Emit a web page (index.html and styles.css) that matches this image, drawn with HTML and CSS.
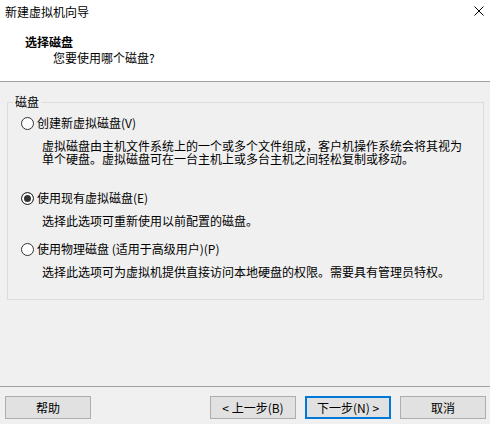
FILE: index.html
```html
<!DOCTYPE html>
<html lang="zh-CN">
<head>
    <meta charset="UTF-8">
    <meta name="viewport" content="width=device-width, initial-scale=1.0">
    <title>新建虚拟机向导</title>
    <link rel="stylesheet" href="styles.css">
</head>
<body>
    <div class="top">
        <div class="titlebar">
            <span>新建虚拟机向导</span>
            <svg class="close" width="10" height="10" viewBox="0 0 10 10">
                <path d="M0.5 0.5 L9.5 9.5 M9.5 0.5 L0.5 9.5" stroke="#000" stroke-width="1" fill="none"/>
            </svg>
        </div>
        <div class="heading">选择磁盘</div>
        <div class="subheading">您要使用哪个磁盘?</div>
    </div>

    <fieldset class="group">
        <legend>磁盘</legend>

        <div class="option first">
            <label class="optLabel"><input type="radio" name="disk">创建新虚拟磁盘(V)</label>
            <div class="desc">虚拟磁盘由主机文件系统上的一个或多个文件组成，客户机操作系统会将其视为单个硬盘。虚拟磁盘可在一台主机上或多台主机之间轻松复制或移动。</div>
        </div>

        <div class="option second">
            <label class="optLabel"><input type="radio" name="disk" checked>使用现有虚拟磁盘(E)</label>
            <div class="desc">选择此选项可重新使用以前配置的磁盘。</div>
        </div>

        <div class="option third">
            <label class="optLabel"><input type="radio" name="disk">使用物理磁盘 (适用于高级用户)(P)</label>
            <div class="desc">选择此选项可为虚拟机提供直接访问本地硬盘的权限。需要具有管理员特权。</div>
        </div>
    </fieldset>

    <div class="footer">
        <button class="btn">帮助</button>
        <div class="navButtons">
            <button class="btn">&lt; 上一步(B)</button>
            <button class="btn default">下一步(N) &gt;</button>
            <button class="btn">取消</button>
        </div>
    </div>
</body>
</html>
```

FILE: styles.css
```css
html, body {
    margin: 0;
    padding: 0;
}

body {
    width: 490px;
    height: 424px;
    display: flex;
    flex-direction: column;
    background-color: #f0f0f0;
    font-family: "Noto Sans CJK SC", "Noto Sans", sans-serif;
    font-size: 12px;
    color: #000;
    overflow: hidden;
}

.top {
    height: 81px;
    background-color: #fff;
    border-bottom: 1px solid #a0a0a0;
}

.titlebar {
    height: 24px;
    line-height: 24px;
    padding-left: 5px;
    display: flex;
    justify-content: space-between;
    align-items: center;
}

.close {
    margin-right: 6px;
    margin-top: -2px;
}

.heading {
    margin-top: 10px;
    padding-left: 25px;
    line-height: 16px;
    font-weight: bold;
}

.subheading {
    padding-left: 53px;
    line-height: 16px;
}

.group {
    margin: 14px 0 0 7px;
    width: 477px;
    box-sizing: border-box;
    border: 1px solid #dcdcdc;
    padding: 0 0 21px 5px;
}

.group legend {
    padding: 0 2px;
    line-height: 12px;
}

.option {
    padding-left: 8px;
}

.option.first {
    margin-top: 8px;
}

.option.second {
    margin-top: 26px;
}

.option.third {
    margin-top: 15px;
}

.optLabel {
    display: flex;
    align-items: center;
    height: 14px;
    line-height: 14px;
}

.optLabel input {
    appearance: none;
    -webkit-appearance: none;
    width: 13px;
    height: 13px;
    margin: 0 3px 0 0;
    border: 1px solid #333;
    border-radius: 50%;
    background-color: #fff;
    box-sizing: border-box;
}

.optLabel input:checked {
    background-color: #333;
    box-shadow: inset 0 0 0 2px #fff;
}

.desc {
    margin-top: 9px;
    padding-left: 21px;
    width: 426px;
    line-height: 13px;
}

.footer {
    margin-top: auto;
    border-top: 1px solid #a0a0a0;
    padding: 9px 4px 5px 5px;
    display: flex;
    justify-content: space-between;
}

.navButtons {
    display: flex;
    gap: 9px;
}

.btn {
    width: 86px;
    height: 23px;
    box-sizing: border-box;
    background-color: #e1e1e1;
    border: 1px solid #adadad;
    font-family: inherit;
    font-size: 12px;
    color: #000;
    padding: 0;
    margin: 0;
}

.btn.default {
    border: 2px solid #0078d7;
}
```
